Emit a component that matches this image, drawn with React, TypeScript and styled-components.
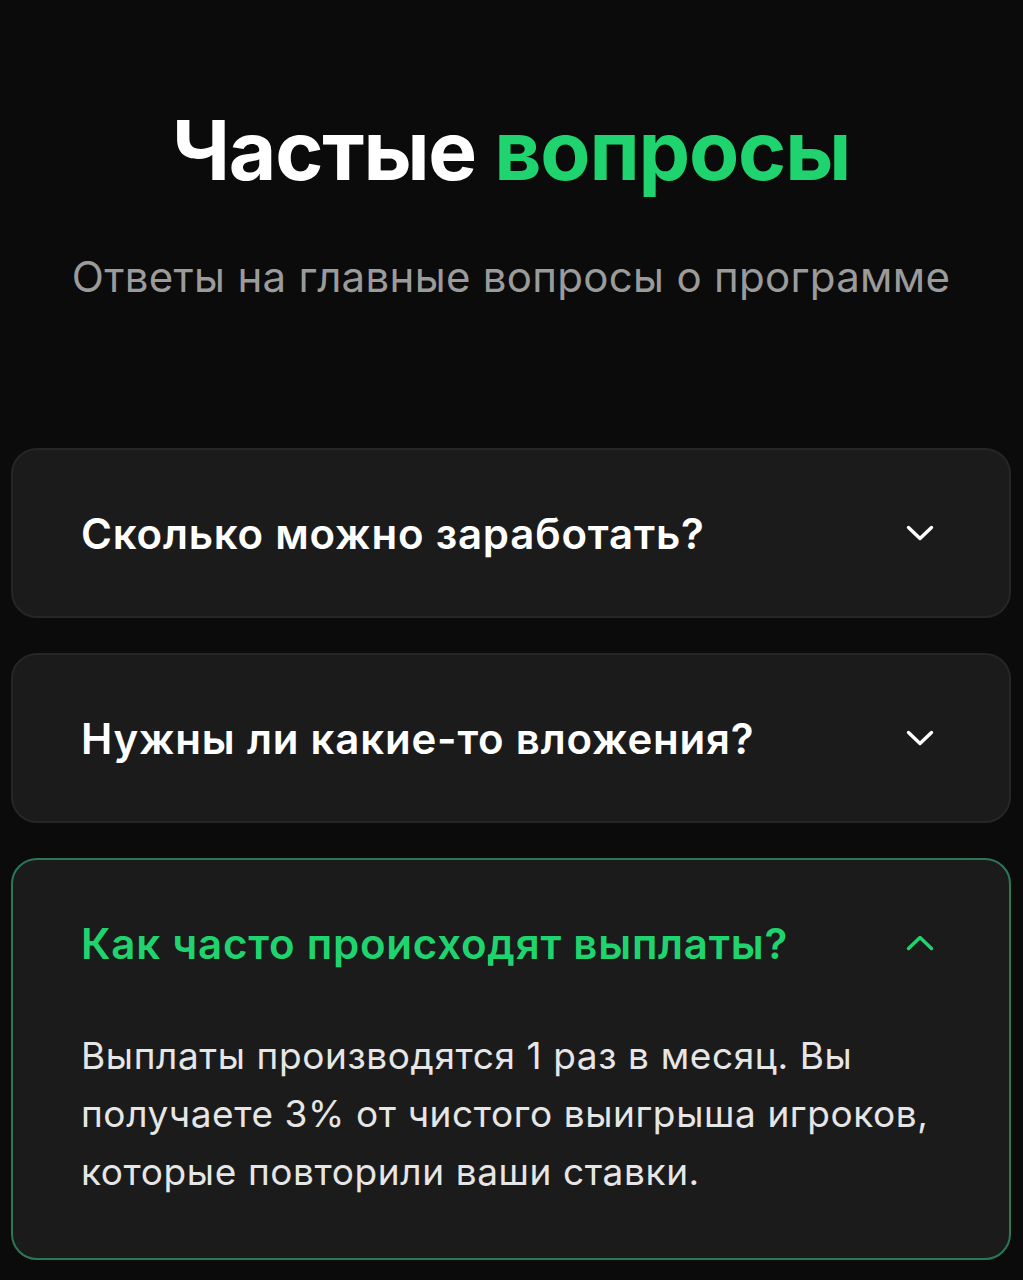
import React, { useState } from "react";
import styled, { createGlobalStyle } from "styled-components";

const GlobalStyle = createGlobalStyle`
  html, body {
    margin: 0;
    padding: 0;
    background: #0b0b0b;
  }
  body {
    font-family: Inter, "Noto Sans", "Liberation Sans", sans-serif;
    -webkit-font-smoothing: antialiased;
  }
  * { box-sizing: border-box; }
`;

const GREEN = "#1fd46e";

const Page = styled.main`
  min-height: 1280px;
  background: #0b0b0b;
  padding: 102px 12px 22px 11px;
  display: flex;
  flex-direction: column;
`;

const Header = styled.header`
  display: flex;
  flex-direction: column;
  align-items: center;
  gap: 52px;
  margin-bottom: 146px;
`;

const Title = styled.h1`
  margin: 0;
  font-size: 82px;
  line-height: 98px;
  font-weight: 700;
  letter-spacing: -1.2px;
  color: #ffffff;
  text-align: center;
`;

const Accent = styled.span`
  color: ${GREEN};
`;

const Subtitle = styled.p`
  margin: 0;
  font-size: 42px;
  line-height: 50px;
  font-weight: 400;
  letter-spacing: 0.3px;
  color: #9b9b9b;
  text-align: center;
`;

const List = styled.div`
  display: flex;
  flex-direction: column;
  gap: 35px;
`;

const Card = styled.section<{ $open: boolean }>`
  background: #1b1b1c;
  border: 2px solid ${(p) => (p.$open ? "#2a7856" : "#262627")};
  border-radius: 26px;
  padding: 0 68px;
`;

const QuestionButton = styled.button<{ $open: boolean }>`
  all: unset;
  cursor: pointer;
  display: flex;
  align-items: center;
  justify-content: space-between;
  width: 100%;
  height: 166px;
  font-family: inherit;
  font-size: 42px;
  font-weight: 600;
  letter-spacing: 0.8px;
  color: ${(p) => (p.$open ? GREEN : "#ffffff")};
`;

const Chevron = styled.svg<{ $open: boolean }>`
  width: 30px;
  height: 18px;
  margin-right: 6px;
  flex-shrink: 0;
  color: ${(p) => (p.$open ? GREEN : "#ffffff")};
  transform: rotate(${(p) => (p.$open ? "180deg" : "0deg")});
`;

const Answer = styled.p`
  margin: 1px 0 0;
  padding-bottom: 57px;
  font-size: 37px;
  line-height: 58px;
  font-weight: 400;
  letter-spacing: 0.6px;
  color: #e6e6e6;
  max-width: 860px;
`;

const faqs = [
  {
    q: "Сколько можно заработать?",
    a: "",
  },
  {
    q: "Нужны ли какие-то вложения?",
    a: "",
  },
  {
    q: "Как часто происходят выплаты?",
    a: "Выплаты производятся 1 раз в месяц. Вы получаете 3% от чистого выигрыша игроков, которые повторили ваши ставки.",
  },
];

export default function App() {
  const [open, setOpen] = useState<number | null>(2);

  return (
    <>
      <GlobalStyle />
      <Page>
        <Header>
          <Title>
            Частые <Accent>вопросы</Accent>
          </Title>
          <Subtitle>Ответы на главные вопросы о программе</Subtitle>
        </Header>
        <List>
          {faqs.map((item, i) => {
            const isOpen = open === i;
            return (
              <Card key={item.q} $open={isOpen}>
                <QuestionButton
                  $open={isOpen}
                  onClick={() => setOpen(isOpen ? null : i)}
                >
                  {item.q}
                  <Chevron $open={isOpen} viewBox="0 0 30 18" fill="none">
                    <path
                      d="M3.5 3.5L15 14.5L26.5 3.5"
                      stroke="currentColor"
                      strokeWidth="3.4"
                      strokeLinecap="round"
                      strokeLinejoin="round"
                    />
                  </Chevron>
                </QuestionButton>
                {isOpen && item.a && <Answer>{item.a}</Answer>}
              </Card>
            );
          })}
        </List>
      </Page>
    </>
  );
}
